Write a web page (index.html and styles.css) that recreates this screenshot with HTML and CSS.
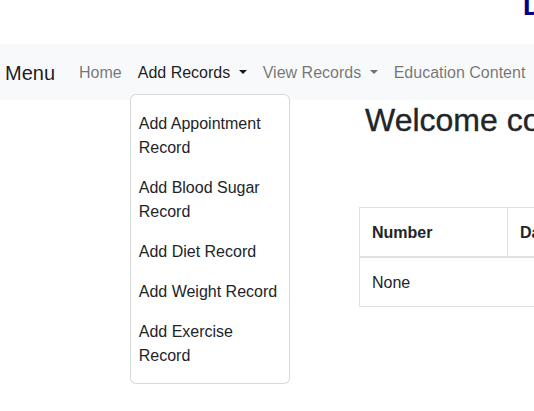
FILE: index.html
```html
<!DOCTYPE html>
<html lang="en">
<head>
<meta charset="utf-8">
<title>Diabetes Tracker</title>
<link rel="stylesheet" href="styles.css">
</head>
<body>
<header class="site-header">
  <h1 class="site-title">Diabetes Tracker</h1>
</header>
<nav class="navbar">
  <a class="brand" href="#">Menu</a>
  <ul class="nav-list">
    <li class="nav-item"><a class="nav-link" href="#">Home</a></li>
    <li class="nav-item">
      <a class="nav-link dropdown-toggle active" href="#">Add Records </a>
      <ul class="dropdown-menu">
        <li><a class="dropdown-item" href="#">Add Appointment Record</a></li>
        <li><a class="dropdown-item" href="#">Add Blood Sugar Record</a></li>
        <li><a class="dropdown-item" href="#">Add Diet Record</a></li>
        <li><a class="dropdown-item" href="#">Add Weight Record</a></li>
        <li><a class="dropdown-item" href="#">Add Exercise Record</a></li>
      </ul>
    </li>
    <li class="nav-item"><a class="nav-link dropdown-toggle" href="#">View Records </a></li>
    <li class="nav-item"><a class="nav-link" href="#">Education Content</a></li>
  </ul>
</nav>
<main class="main">
  <h2 class="welcome">Welcome come back</h2>
  <table class="records">
    <thead>
      <tr>
        <th class="col-number">Number</th>
        <th>Date</th>
        <th>Time</th>
        <th>Notes</th>
      </tr>
    </thead>
    <tbody>
      <tr>
        <td colspan="4">None</td>
      </tr>
    </tbody>
  </table>
</main>
</body>
</html>
```
FILE: styles.css
```css
html {
  height: 100%;
}

body {
  margin: 0;
  min-height: 100%;
  font-family: "Liberation Sans", Arial, sans-serif;
  font-size: 16px;
  line-height: 1.5;
  color: #212529;
  background: #fff;
}

.site-header {
  height: 44px;
  overflow: hidden;
  padding-left: 523px;
  white-space: nowrap;
}

.site-title {
  margin: -7px 0 0 0;
  font-size: 27px;
  line-height: 1;
  font-weight: bold;
  color: #000080;
}

.navbar {
  display: flex;
  align-items: center;
  background: #f8f9fa;
  padding: 8px 0 8px 5px;
  white-space: nowrap;
}

.brand {
  font-size: 20px;
  line-height: 30px;
  padding: 6px 0 4px 0;
  margin-right: 16px;
  color: rgba(0, 0, 0, 0.9);
  text-decoration: none;
}

.nav-list {
  display: flex;
  list-style: none;
  margin: 0;
  padding: 0;
}

.nav-item {
  position: relative;
}

.nav-link {
  display: block;
  padding: 9px 8px 7px 8px;
  color: rgba(0, 0, 0, 0.55);
  text-decoration: none;
}

.nav-link.active {
  color: rgba(0, 0, 0, 0.9);
}

.dropdown-toggle::after {
  display: inline-block;
  margin-left: 0.255em;
  vertical-align: 0.255em;
  content: "";
  border-top: 0.3em solid;
  border-right: 0.3em solid transparent;
  border-bottom: 0;
  border-left: 0.3em solid transparent;
}

.dropdown-menu {
  position: absolute;
  top: 100%;
  left: 0;
  z-index: 10;
  box-sizing: border-box;
  width: 160px;
  margin: 2px 0 0 0;
  padding: 8px 0;
  list-style: none;
  background: #fff;
  border: 1px solid rgba(0, 0, 0, 0.15);
  border-radius: 6px;
  white-space: normal;
}

.dropdown-item {
  display: block;
  padding: 9px 8px 7px 8px;
  color: #212529;
  text-decoration: none;
}

.main {
  overflow: hidden;
  padding: 1px 0 0 359px;
}

.welcome {
  margin: 0 0 68px 0;
  padding-left: 6px;
  font-size: 32px;
  line-height: 1.2;
  font-weight: 500;
  white-space: nowrap;
  color: #212529;
  -webkit-text-stroke: 0.35px #212529;
}

.records {
  border-collapse: collapse;
  width: 640px;
}

.records th,
.records td {
  border: 1px solid #dee2e6;
  padding: 13px 12px 11px 12px;
  text-align: left;
}

.records th {
  font-weight: bold;
  border-bottom-width: 2px;
}

.records .col-number {
  width: 123px;
}
```
